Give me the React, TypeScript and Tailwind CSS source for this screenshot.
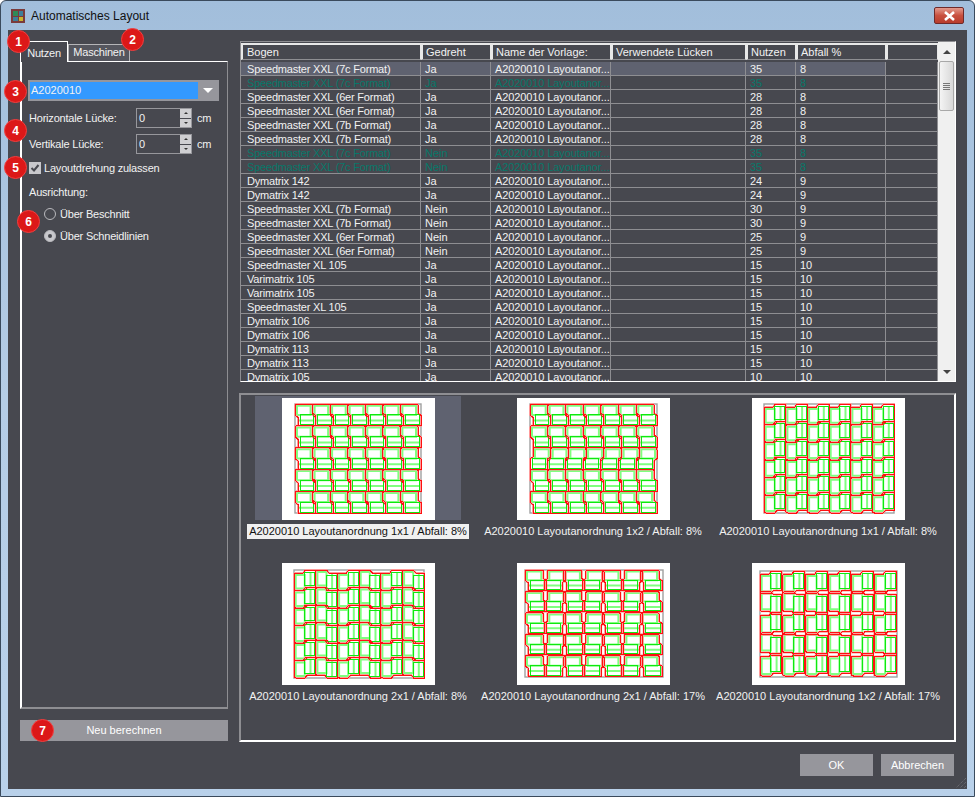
// ── Data ──────────────────────────────────────────────────────────────────────

type Row = { name: string; turned: string; uses: number; waste: number; off?: boolean }

const VORLAGE = 'A2020010 Layoutanor...'

const ROWS: Row[] = [
  { name: 'Speedmaster XXL (7c Format)', turned: 'Ja', uses: 35, waste: 8 },
  { name: 'Speedmaster XXL (7c Format)', turned: 'Ja', uses: 35, waste: 8, off: true },
  { name: 'Speedmaster XXL (6er Format)', turned: 'Ja', uses: 28, waste: 8 },
  { name: 'Speedmaster XXL (6er Format)', turned: 'Ja', uses: 28, waste: 8 },
  { name: 'Speedmaster XXL (7b Format)', turned: 'Ja', uses: 28, waste: 8 },
  { name: 'Speedmaster XXL (7b Format)', turned: 'Ja', uses: 28, waste: 8 },
  { name: 'Speedmaster XXL (7c Format)', turned: 'Nein', uses: 35, waste: 8, off: true },
  { name: 'Speedmaster XXL (7c Format)', turned: 'Nein', uses: 35, waste: 8, off: true },
  { name: 'Dymatrix 142', turned: 'Ja', uses: 24, waste: 9 },
  { name: 'Dymatrix 142', turned: 'Ja', uses: 24, waste: 9 },
  { name: 'Speedmaster XXL (7b Format)', turned: 'Nein', uses: 30, waste: 9 },
  { name: 'Speedmaster XXL (7b Format)', turned: 'Nein', uses: 30, waste: 9 },
  { name: 'Speedmaster XXL (6er Format)', turned: 'Nein', uses: 25, waste: 9 },
  { name: 'Speedmaster XXL (6er Format)', turned: 'Nein', uses: 25, waste: 9 },
  { name: 'Speedmaster XL 105', turned: 'Ja', uses: 15, waste: 10 },
  { name: 'Varimatrix 105', turned: 'Ja', uses: 15, waste: 10 },
  { name: 'Varimatrix 105', turned: 'Ja', uses: 15, waste: 10 },
  { name: 'Speedmaster XL 105', turned: 'Ja', uses: 15, waste: 10 },
  { name: 'Dymatrix 106', turned: 'Ja', uses: 15, waste: 10 },
  { name: 'Dymatrix 106', turned: 'Ja', uses: 15, waste: 10 },
  { name: 'Dymatrix 113', turned: 'Ja', uses: 15, waste: 10 },
  { name: 'Dymatrix 113', turned: 'Ja', uses: 15, waste: 10 },
  { name: 'Dymatrix 105', turned: 'Ja', uses: 10, waste: 10 },
]

type Sheet = {
  label: string
  frame: [number, number, number, number]
  cols: number
  rows: number
  vertical?: boolean
  gap?: number
  flip?: (c: number, r: number) => boolean
}

const SHEETS: Sheet[] = [
  { label: 'A2020010 Layoutanordnung 1x1 / Abfall: 8%', frame: [13, 6, 126, 109], cols: 7, rows: 5 },
  { label: 'A2020010 Layoutanordnung 1x2 / Abfall: 8%', frame: [13, 6, 127, 109], cols: 7, rows: 5, flip: (_, r) => r === 2 },
  { label: 'A2020010 Layoutanordnung 1x1 / Abfall: 8%', frame: [12, 6, 130, 109], cols: 6, rows: 6, vertical: true },
  { label: 'A2020010 Layoutanordnung 2x1 / Abfall: 8%', frame: [12, 7, 130, 108], cols: 6, rows: 6, vertical: true, flip: c => c % 2 === 1 },
  { label: 'A2020010 Layoutanordnung 2x1 / Abfall: 17%', frame: [8, 7, 138, 107], cols: 7, rows: 5, gap: 1, flip: c => c % 2 === 1 },
  { label: 'A2020010 Layoutanordnung 1x2 / Abfall: 17%', frame: [8, 8, 137, 106], cols: 6, rows: 5, vertical: true, gap: 1, flip: (_, r) => r % 2 === 1 },
]

// ── Layout thumbnail ──────────────────────────────────────────────────────────

function SheetThumb({ sheet }: { sheet: Sheet }) {
  const [fx, fy, fw, fh] = sheet.frame
  const j = 3 // step between the two halves of a piece
  const pw = (fw - (sheet.vertical ? 0 : j)) / sheet.cols
  const ph = (fh - (sheet.vertical ? j : 0)) / sheet.rows
  const gap = sheet.gap ?? 0
  const outlines: string[] = []
  const light: string[] = []
  const bright: string[] = []

  for (let r = 0; r < sheet.rows; r++) {
    for (let c = 0; c < sheet.cols; c++) {
      const flipped = sheet.flip?.(c, r) ?? false
      const ox = fx + c * pw
      const oy = fy + r * ph
      const us = (sheet.vertical ? ph : pw) - gap
      const vs = (sheet.vertical ? pw : ph) - gap
      const pt = (u: number, v: number) => {
        const uu = flipped !== !!sheet.vertical ? us + j - u : u
        const x = sheet.vertical ? ox + v : ox + uu
        const y = sheet.vertical ? oy + uu : oy + v
        return `${x.toFixed(1)} ${y.toFixed(1)}`
      }
      const line = (pts: [number, number][], closed = true) =>
        'M' + pts.map(p => pt(p[0], p[1])).join('L') + (closed ? 'Z' : '')
      outlines.push(line([
        [1, 0], [us - 1, 0], [us, 1], [us, vs * 0.42], [us + j, vs * 0.52], [us + j, vs],
        [j, vs], [j, vs * 0.62], [0, vs * 0.5], [0, vs * 0.1],
      ]))
      bright.push(line([[j + 2, vs * 0.5], [us + j - 2, vs * 0.5], [us + j - 2, vs - 1], [j + 2, vs - 1]]))
      light.push(line([[2, vs * 0.08], [us - 2, vs * 0.08], [us - 2, vs * 0.5], [2, vs * 0.5]]))
      light.push(line([[3, vs * 0.76], [us + 1, vs * 0.76]], false))
    }
  }

  return (
    <svg width="153" height="122" viewBox="0 0 153 122" className="block bg-white">
      <rect x={fx} y={fy} width={fw} height={fh} fill="none" stroke="#a0a0a0" strokeWidth="1.4" />
      <path d={light.join('')} fill="none" stroke="#80ff80" strokeWidth="2" />
      <path d={outlines.join('')} fill="none" stroke="#ff9a9a" strokeWidth="2" />
      <path d={bright.join('')} fill="none" stroke="#10e810" strokeWidth="1" shapeRendering="crispEdges" />
      <path d={outlines.join('')} fill="none" stroke="#ff1010" strokeWidth="1" shapeRendering="crispEdges" />
    </svg>
  )
}

// ── Small controls ────────────────────────────────────────────────────────────

function Badge({ n, className }: { n: number; className: string }) {
  return (
    <div className={`absolute z-10 flex h-[23px] w-[23px] items-center justify-center rounded-full border border-[#f04040] bg-[#dc1818] text-[12px] font-bold text-white ${className}`}>
      {n}
    </div>
  )
}

function Spin({ label, className }: { label: string; className: string }) {
  return (
    <div className={`flex h-[20px] items-center ${className}`}>
      <span className="w-[107px]">{label}</span>
      <div className="flex h-[20px] w-[56px] border border-[#97979c]">
        <span className="flex-1 pl-[2px] leading-[18px]">0</span>
        <div className="flex w-[11px] flex-col gap-px bg-[#47484f]">
          <div className="flex flex-1 items-center justify-center bg-[#cfcfd2]">
            <div className="h-0 w-0 border-x-[2px] border-b-[2px] border-x-transparent border-b-[#333]" />
          </div>
          <div className="flex flex-1 items-center justify-center bg-[#cfcfd2]">
            <div className="h-0 w-0 border-x-[2px] border-t-[2px] border-x-transparent border-t-[#333]" />
          </div>
        </div>
      </div>
      <span className="ml-[5px]">cm</span>
    </div>
  )
}

function Radio({ label, checked, className }: { label: string; checked?: boolean; className: string }) {
  return (
    <div className={`flex h-[14px] items-center pl-[16px] ${className}`}>
      <div className={`flex h-[12px] w-[12px] items-center justify-center rounded-full border border-[#b9b9bd] ${checked ? 'bg-[#c8c8cc]' : ''}`}>
        {checked && <div className="h-[4px] w-[4px] rounded-full bg-[#47484f]" />}
      </div>
      <span className="ml-[4px]">{label}</span>
    </div>
  )
}

const COLS = ['w-[180px] pl-[6px] tracking-[-0.2px]', 'w-[70px] pl-[4px]', 'w-[120px] pl-[4px] tracking-[-0.1px]', 'w-[135px] pl-[4px]', 'w-[50px] pl-[4px]', 'w-[90px] pl-[4px]', 'w-[52px] pl-[4px]']
const HCOLS = ['w-[180px] pl-[4px]', 'w-[70px] pl-[3px]', 'w-[120px] pl-[3px]', 'w-[135px] pl-[3px]', 'w-[50px] pl-[3px]', 'w-[90px] pl-[3px]', 'w-[52px] pl-[3px]']
const HEADS = ['Bogen', 'Gedreht', 'Name der Vorlage:', 'Verwendete Lücken', 'Nutzen', 'Abfall %', '']

// ── Window ────────────────────────────────────────────────────────────────────

export default function App() {
  return (
    <div
      className="relative flex h-[797px] w-[975px] flex-col overflow-hidden rounded-t-[6px] border border-[#3a4a5c] bg-gradient-to-b from-[#a2bedb] via-[#b5cde6] to-[#b9d1ea] text-[11px] text-[#f2f2f2]"
      style={{ fontFamily: '"Liberation Sans", Arial, sans-serif' }}
    >
      {/* Title bar */}
      <div className="flex h-[29px] flex-none items-center pl-[9px] pr-[10px] text-[#111]">
        <svg width="16" height="16" viewBox="0 0 16 16" className="flex-none">
          <rect x="1" y="1" width="14" height="14" fill="#7a3b3b" />
          <rect x="3" y="3" width="5" height="5" fill="#2e8b57" />
          <rect x="9" y="3" width="4" height="5" fill="#3d7f9a" />
          <rect x="3" y="9" width="5" height="4" fill="#3d7f9a" />
          <rect x="9" y="9" width="4" height="4" fill="#c9b52e" />
        </svg>
        <span className="ml-[5px] text-[12px]">Automatisches Layout</span>
        <div className="ml-auto flex h-[17px] w-[30px] items-center justify-center rounded-[2px] border border-[#6e2a2a] bg-gradient-to-b from-[#e29a8e] via-[#c8503f] to-[#b83c2c]">
          <svg width="13" height="10" viewBox="0 0 13 10">
            <path d="M2 1 L11 9 M11 1 L2 9" stroke="#fff" strokeWidth="2.6" />
          </svg>
        </div>
      </div>

      {/* Client area */}
      <div className="relative mx-[7px] flex h-[759px] flex-none gap-[11px] bg-[#47484f] pl-[12px] pt-[11px]">
        {/* Left column */}
        <div className="flex w-[208px] flex-none flex-col tracking-[-0.2px]">
          <div className="flex h-[20px] items-end">
            <div className="relative z-[1] -mb-px flex h-[21px] w-[48px] items-center justify-center border-x border-t border-white bg-[#47484f] pt-[2px]">
              Nutzen
            </div>
            <div className="flex h-[17px] w-[62px] items-center justify-center border-x border-t border-[#b5b5b8] bg-[#55565e] pb-[1px]">
              Maschinen
            </div>
          </div>
          <div className="flex h-[648px] flex-col border-b-2 border-l-2 border-r border-t border-b-[#8e8e92] border-l-white border-r-[#8e8e92] border-t-white pl-[6px] pt-[18px]">
            <div className="flex h-[21px] w-[191px] border-2 border-[#96969c] bg-[#96969c]">
              <div className="flex flex-1 items-center bg-[#3399ff] pl-[1px] tracking-normal">A2020010</div>
              <div className="flex w-[19px] items-center justify-center">
                <div className="h-0 w-0 border-x-[5px] border-t-[5px] border-x-transparent border-t-white" />
              </div>
            </div>
            <Spin label="Horizontale Lücke:" className="ml-[1px] mt-[7px]" />
            <Spin label="Vertikale Lücke:" className="ml-[1px] mt-[6px]" />
            <div className="ml-[1px] mt-[8px] flex h-[12px] items-center">
              <div className="flex h-[12px] w-[12px] items-center justify-center bg-[#c8c8cc]">
                <svg width="10" height="10" viewBox="0 0 10 10">
                  <path d="M1.5 5 L4 7.5 L8.5 2" fill="none" stroke="#47484f" strokeWidth="2" />
                </svg>
              </div>
              <span className="ml-[3px]">Layoutdrehung zulassen</span>
            </div>
            <div className="ml-[1px] mt-[11px] h-[14px] leading-[14px]">Ausrichtung:</div>
            <Radio label="Über Beschnitt" className="mt-[8px]" />
            <Radio label="Über Schneidlinien" checked className="mt-[8px]" />
          </div>
          <div className="mt-[11px] flex h-[21px] items-center justify-center bg-[#96969c] tracking-normal text-white">
            Neu berechnen
          </div>
        </div>

        {/* Right column */}
        <div className="flex w-[717px] flex-none flex-col">
          <div className="ml-[1px] flex h-[341px] border-b border-l border-r border-t border-b-white border-l-[#8e8e92] border-r-white border-t-[#8e8e92]">
            <div className="flex-1 overflow-hidden pt-px">
              <div className="flex h-[17px]">
                {HEADS.map((h, i) => (
                  <div key={i} className={`${HCOLS[i]} flex flex-none items-center border-b border-l-2 border-r border-t-2 border-b-[#8e8e92] border-l-[#e8e8e8] border-r-[#e8e8e8] border-t-[#e8e8e8] leading-[13px]`}>
                    {h}
                  </div>
                ))}
              </div>
              <div className="mt-[2px]">
                {ROWS.map((row, idx) => {
                  const cells = [row.name, row.turned, VORLAGE, '', String(row.uses), String(row.waste), '']
                  return (
                    <div key={idx} className={`flex h-[14px] ${row.off ? 'text-[#08786a]' : ''}`}>
                      {cells.map((c, i) => (
                        <div
                          key={i}
                          className={`${COLS[i]} h-[14px] flex-none overflow-hidden whitespace-nowrap border-b border-r border-[#8e8e92] leading-[14px] ${idx === 0 && i < 6 ? 'bg-[#5f6270]' : ''}`}
                        >
                          {c}
                        </div>
                      ))}
                    </div>
                  )
                })}
              </div>
            </div>
            {/* Scrollbar */}
            <div className="flex w-[17px] flex-none flex-col items-center bg-[#f0f0f0]">
              <div className="flex h-[19px] items-center">
                <div className="h-0 w-0 border-x-[4px] border-b-[4px] border-x-transparent border-b-[#444]" />
              </div>
              <div className="flex h-[50px] w-[15px] flex-col items-center justify-center gap-px rounded-[2px] border border-[#a8a8a8] bg-gradient-to-r from-[#f4f4f4] to-[#d8d8d8]">
                <div className="h-px w-[7px] bg-[#777]" />
                <div className="h-px w-[7px] bg-[#777]" />
                <div className="h-px w-[7px] bg-[#777]" />
                <div className="h-px w-[7px] bg-[#777]" />
              </div>
              <div className="mt-auto flex h-[19px] items-center">
                <div className="h-0 w-0 border-x-[4px] border-t-[4px] border-x-transparent border-t-[#444]" />
              </div>
            </div>
          </div>

          {/* Gallery */}
          <div className="mt-[11px] grid h-[349px] grid-cols-[235px_235px_235px] content-start gap-y-[22px] border-b-2 border-l-2 border-r-2 border-t-2 border-b-white border-l-[#8e8e92] border-r-white border-t-[#8e8e92] pt-[1px]">
            {SHEETS.map((s, i) => (
              <div key={i} className="ml-[14px] flex w-[206px] flex-col items-center">
                <div className={`h-[124px] w-[206px] pl-[27px] pt-[2px] ${i === 0 ? 'bg-[#5f6270]' : ''}`}>
                  <SheetThumb sheet={s} />
                </div>
                <div className={`mt-[4px] h-[15px] whitespace-nowrap px-[2px] leading-[15px] ${i === 0 ? 'bg-[#f0f0f0] text-[#111]' : ''}`}>
                  {s.label}
                </div>
              </div>
            ))}
          </div>

          <div className="mt-[12px] flex justify-end gap-[8px] pr-[2px] text-white">
            <div className="flex h-[22px] w-[73px] items-center justify-center bg-[#96969c]">OK</div>
            <div className="flex h-[22px] w-[73px] items-center justify-center bg-[#96969c]">Abbrechen</div>
          </div>
        </div>

        {/* Callout badges */}
        <Badge n={1} className="left-[-1px] top-[0px]" />
        <Badge n={2} className="left-[113px] top-[-2px]" />
        <Badge n={3} className="left-[-4px] top-[50px]" />
        <Badge n={4} className="left-[-4px] top-[89px]" />
        <Badge n={5} className="left-[-4px] top-[126px]" />
        <Badge n={6} className="left-[9px] top-[180px]" />
        <Badge n={7} className="left-[23px] top-[689px]" />

        {/* Resize grip */}
        <svg width="14" height="14" viewBox="0 0 14 14" className="absolute bottom-0 right-0">
          <path d="M13 3 L3 13 M13 7 L7 13 M13 11 L11 13" stroke="#74747a" strokeDasharray="1 1" />
        </svg>
      </div>
    </div>
  )
}
